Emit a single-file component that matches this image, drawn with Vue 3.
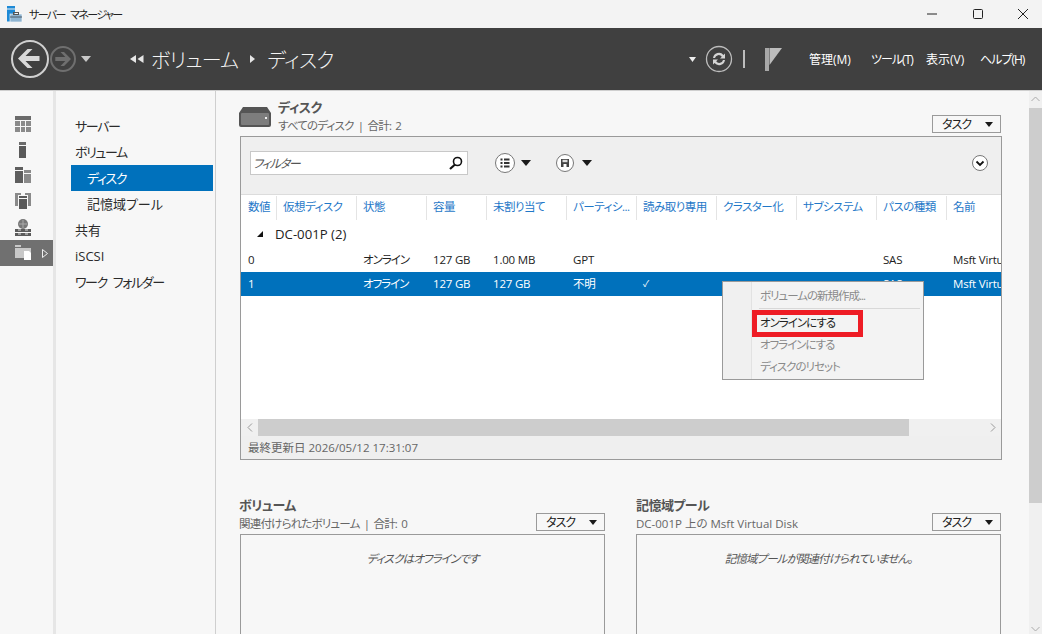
<script setup>
const sideIcons = ['dash', 'server', 'all', 'group', 'iis', 'files']

const serverNav = [
  { label: 'サーバー', tight: true },
  { label: 'ボリューム', tight: true },
  { label: 'ディスク', sub: true, active: true, tight: true },
  { label: '記憶域プール', sub: true },
  { label: '共有' },
  { label: 'iSCSI' },
  { label: 'ワーク フォルダー', tight: true }
]

const columns = ['数値', '仮想ディスク', '状態', '容量', '未割り当て', 'パーティシ...', '読み取り専用', 'クラスター化', 'サブシステム', 'パスの種類', '名前']

const rows = [
  ['0', '', 'オンライン', '127 GB', '1.00 MB', 'GPT', '', '', '', 'SAS', 'Msft Virtual Disk'],
  ['1', '', 'オフライン', '127 GB', '127 GB', '不明', '✓', '', '', 'SAS', 'Msft Virtual Disk']
]

const menuItems = [
  { label: 'ボリュームの新規作成...' },
  { sep: true },
  { label: 'オンラインにする', on: true },
  { label: 'オフラインにする' },
  { label: 'ディスクのリセット' }
]
</script>

<template>
  <div class="window">
    <div class="titlebar">
      <svg class="app-icon" width="16" height="16" viewBox="0 0 16 16">
        <rect x="0" y="0" width="8" height="2.5" fill="#1e8ad6" />
        <rect x="0" y="3.5" width="8" height="12" fill="#1e8ad6" />
        <rect x="3" y="8" width="12" height="8" fill="#8fb4d0" stroke="#fff" stroke-width=".6" />
        <rect x="6.5" y="6.5" width="5" height="2" fill="none" stroke="#555" />
        <rect x="3" y="10.5" width="12" height="1" fill="#4a5a68" />
      </svg>
      <span class="app-title">サーバー マネージャー</span>
      <div class="win-btns">
        <svg width="12" height="12" viewBox="0 0 12 12"><path d="M1 6h10" stroke="#222" stroke-width="1" /></svg>
        <svg width="12" height="12" viewBox="0 0 12 12"><rect x="1.5" y="1.5" width="9" height="9" rx="1" fill="none" stroke="#222" /></svg>
        <svg width="12" height="12" viewBox="0 0 12 12"><path d="M1 1l10 10M11 1L1 11" stroke="#222" /></svg>
      </div>
    </div>

    <div class="header">
      <svg class="nav-arrows" width="84" height="40" viewBox="0 0 84 40">
        <circle cx="20" cy="20" r="18" fill="none" stroke="#d0d0d0" stroke-width="2" />
        <path d="M8 19.500l9.500-9.500h5l-7 7h14v5h-14l7 7h-5z" fill="#d8d8d8" />
        <circle cx="53" cy="20" r="12" fill="none" stroke="#6f6f6f" stroke-width="2" />
        <path d="M61 20l-7-7h-3.500l4.800 5h-10v4h10l-4.800 5h3.500z" fill="#6f6f6f" />
        <path d="M71 17h10l-5 6z" fill="#c8c8c8" />
      </svg>
      <div class="crumbs">
        <svg width="14" height="8" viewBox="0 0 14 8"><path d="M6 0v8L0 4zM7.500 4l6-4v8z" fill="#e6e6e6" /></svg>
        <span class="crumb first">ボリューム</span>
        <svg width="5" height="8" viewBox="0 0 5 8"><path d="M0 0l5 4-5 4z" fill="#e6e6e6" /></svg>
        <span class="crumb">ディスク</span>
      </div>
      <div class="header-right">
        <svg width="7" height="5" viewBox="0 0 7 5"><path d="M0 0h7L3.500 5z" fill="#eee" /></svg>
        <svg class="refresh" width="28" height="28" viewBox="0 0 28 28">
          <circle cx="14" cy="14" r="12.500" fill="none" stroke="#bdbdbd" stroke-width="1.300" />
          <path d="M8 13a6 6 0 0 1 10.500-3l1.500-1.500v5h-5l1.800-1.800A3.800 3.800 0 0 0 10 13z" fill="#d4d4d4" />
          <path d="M20 15a6 6 0 0 1-10.500 3L8 19.500v-5h5l-1.800 1.800A3.800 3.800 0 0 0 18 15z" fill="#d4d4d4" />
        </svg>
        <span class="bar"></span>
        <svg class="flag" width="17" height="23" viewBox="0 0 17 23">
          <rect x="0" y="0" width="4" height="23" fill="#a8a8a8" />
          <path d="M4.500 0H17L4.500 17z" fill="#bdbdbd" />
        </svg>
        <nav class="menu-bar">
          <span class="m-manage">管理(M)</span>
          <span class="m-tools">ツール(T)</span>
          <span class="m-view">表示(V)</span>
          <span class="m-help">ヘルプ(H)</span>
        </nav>
      </div>
    </div>

    <div class="body">
      <aside class="icon-rail">
        <div v-for="ic in sideIcons" :key="ic" class="rail-item" :class="{ on: ic === 'files' }">
          <svg v-if="ic === 'dash'" width="16" height="16" viewBox="0 0 16 16">
            <rect width="16" height="4" fill="#6b6b6b" />
            <path d="M0 5h5v5H0zM6 5h4v5H6zM11 5h5v5h-5zM0 11h5v5H0zM6 11h4v5H6zM11 11h5v5h-5z" fill="#8a8a8a" />
          </svg>
          <svg v-else-if="ic === 'server'" class="ic-server" width="7" height="16" viewBox="0 0 7 16">
            <rect width="7" height="3" fill="#6b6b6b" />
            <rect y="4" width="7" height="12" fill="#5a5a5a" />
          </svg>
          <svg v-else-if="ic === 'all'" width="16" height="16" viewBox="0 0 16 16">
            <path d="M0 0h8v3H0zM0 4h8v12H0z" fill="#5e5e5e" />
            <path d="M9 3h7v3H9zM9 7h7v9H9z" fill="#8a8a8a" />
          </svg>
          <svg v-else-if="ic === 'group'" width="16" height="16" viewBox="0 0 16 16">
            <path d="M0 0h6v2H3v11H0zM10 0h6v13h-3V2h-3z" fill="#8a8a8a" />
            <path d="M4 3h8v2H4zM4 6h8v10H4z" fill="#5a5a5a" />
          </svg>
          <svg v-else-if="ic === 'iis'" width="16" height="17" viewBox="0 0 16 17">
            <circle cx="8" cy="5" r="5" fill="#777" />
            <path d="M8 1v8M4 5h8" stroke="#aaa" />
            <path d="M0 10h16v3H0zM0 14h16v3H0z" fill="#5a5a5a" />
            <path d="M3 11h3M10 11h3M3 15h3M10 15h3" stroke="#ddd" />
          </svg>
          <svg v-else width="16" height="15" viewBox="0 0 16 15">
            <path d="M0 0h6v2H0zM0 3h16v10H0z" fill="#c8c8c8" />
            <path d="M9 6h5l2 2v7H9z" fill="#fff" />
          </svg>
          <svg v-if="ic === 'files'" class="rail-caret" width="6" height="9" viewBox="0 0 6 9"><path d="M.5.500l5 4-5 4z" fill="none" stroke="#eee" /></svg>
        </div>
      </aside>

      <nav class="server-nav">
        <div v-for="n in serverNav" :key="n.label" class="nav-row" :class="{ sub: n.sub, active: n.active, tight: n.tight }">{{ n.label }}</div>
      </nav>

      <main class="content">
        <section class="disk-head">
          <svg class="disk-icon" width="32" height="20" viewBox="0 0 32 20">
            <path d="M4 0h24l4 6v12a2 2 0 0 1-2 2H2a2 2 0 0 1-2-2V6z" fill="#555" />
            <rect x="2" y="6" width="28" height="12" rx="1" fill="#7d7d7d" />
            <rect x="26" y="10" width="2" height="2" fill="#eee" />
          </svg>
          <div class="titles">
            <div class="h-title">ディスク</div>
            <div class="h-sub">すべてのディスク | 合計: 2</div>
          </div>
          <button class="task-btn"><span>タスク</span><i class="tri"></i></button>
        </section>

        <section class="panel">
          <div class="toolbar">
            <div class="filter">
              <span>フィルター</span>
              <svg width="14" height="14" viewBox="0 0 14 14">
                <circle cx="8.500" cy="5.500" r="4" fill="none" stroke="#111" stroke-width="1.600" />
                <path d="M6 8.500L1 13" stroke="#111" stroke-width="2.200" />
              </svg>
            </div>
            <div class="tool tool-list">
              <svg width="20" height="20" viewBox="0 0 20 20">
                <circle cx="10" cy="10" r="9.500" fill="#fff" stroke="#777" />
                <path d="M5.500 6.500h2M5.500 10h2M5.500 13.500h2M9 6.500h5.500M9 10h5.500M9 13.500h5.500" stroke="#333" stroke-width="1.800" />
              </svg>
              <i class="tri"></i>
            </div>
            <div class="tool tool-save">
              <svg width="18" height="18" viewBox="0 0 18 18">
                <circle cx="9" cy="9" r="8.500" fill="#fff" stroke="#777" />
                <path d="M5 5h8v8H5z" fill="#444" />
                <path d="M6.500 5.800h5v2.400h-5z" fill="#ddd" />
                <path d="M7.500 10h3v3h-3z" fill="#fff" />
              </svg>
              <i class="tri"></i>
            </div>
            <svg class="collapse" width="16" height="16" viewBox="0 0 16 16">
              <circle cx="8" cy="8" r="7.500" fill="#fff" stroke="#777" />
              <path d="M4.500 6.500L8 10l3.500-3.500" fill="none" stroke="#111" stroke-width="1.800" />
            </svg>
          </div>

          <div class="table">
            <div class="t-row t-head">
              <div v-for="c in columns" :key="c" class="cell">{{ c }}</div>
            </div>
            <div class="group"><i class="expander"></i>DC-001P (2)</div>
            <div v-for="(r, i) in rows" :key="i" class="t-row t-body" :class="{ selected: i === 1 }">
              <div v-for="(v, j) in r" :key="j" class="cell" :class="{ check: v === '✓', status: j === 2 }">{{ v }}</div>
            </div>
          </div>

          <div class="hscroll">
            <span class="sc-btn">
              <svg width="6" height="9" viewBox="0 0 6 9"><path d="M5 .500L1 4.500l4 4" fill="none" stroke="#999" /></svg>
            </span>
            <div class="hthumb"></div>
            <span class="sc-btn">
              <svg width="6" height="9" viewBox="0 0 6 9"><path d="M1 .500l4 4-4 4" fill="none" stroke="#999" /></svg>
            </span>
          </div>
          <div class="panel-foot">最終更新日 2026/05/12 17:31:07</div>
        </section>

        <div class="lower">
          <section class="sub-panel left">
            <div class="sub-head">
              <div class="titles">
                <div class="h-title">ボリューム</div>
                <div class="h-sub">関連付けられたボリューム | 合計: 0</div>
              </div>
              <button class="task-btn"><span>タスク</span><i class="tri"></i></button>
            </div>
            <div class="sub-box">ディスクはオフラインです</div>
          </section>
          <section class="sub-panel">
            <div class="sub-head">
              <div class="titles">
                <div class="h-title">記憶域プール</div>
                <div class="h-sub latin">DC-001P 上の Msft Virtual Disk</div>
              </div>
              <button class="task-btn"><span>タスク</span><i class="tri"></i></button>
            </div>
            <div class="sub-box">記憶域プールが関連付けられていません。</div>
          </section>
        </div>
      </main>

      <div class="vscroll">
        <svg width="9" height="6" viewBox="0 0 9 6"><path d="M.500 5l4-4 4 4" fill="none" stroke="#aaa" /></svg>
        <div class="vthumb"></div>
        <svg class="v-down" width="9" height="6" viewBox="0 0 9 6"><path d="M.500 1l4 4 4-4" fill="none" stroke="#aaa" /></svg>
      </div>
    </div>

    <!-- context menu floats over the table -->
    <div class="ctx">
      <template v-for="(m, i) in menuItems" :key="i">
        <div v-if="m.sep" class="ctx-sep"></div>
        <div v-else class="ctx-item" :class="{ on: m.on }">{{ m.label }}</div>
      </template>
    </div>
    <div class="highlight"></div>
  </div>
</template>

<style scoped>
.window {
  position: relative;
  width: 1042px;
  height: 634px;
  overflow: hidden;
  display: flex;
  flex-direction: column;
  background: #f7f7f7;
  font-family: "Open Sans", "Noto Sans CJK JP", sans-serif;
  font-size: 12px;
  font-feature-settings: "palt";
  color: #222;
}

.titlebar {
  height: 28px;
  flex: none;
  display: flex;
  align-items: center;
  padding-left: 7px;
  background: #f3f3f3;
}
.app-title {
  margin-left: 6px;
  font-size: 11px;
  letter-spacing: -1.600px;
  word-spacing: 4px;
}
.win-btns {
  margin-left: auto;
  display: flex;
  gap: 33.500px;
  padding-right: 13px;
}

.header {
  height: 62px;
  flex: none;
  display: flex;
  align-items: center;
  padding-left: 10px;
  background: #404040;
  color: #fff;
}
.crumbs {
  display: flex;
  align-items: center;
  margin-left: 36px;
}
.crumb {
  font-size: 20px;
  font-weight: 300;
  letter-spacing: -0.600px;
  color: #f4f4f4;
  margin-left: 12px;
}
.crumb.first {
  margin-left: 7px;
  margin-right: 12px;
}
.header-right {
  margin-left: auto;
  display: flex;
  align-items: center;
}
.refresh { margin-left: 9px; }
.bar {
  width: 2px;
  height: 18px;
  margin: 0 20px 0 10px;
  background: #bdbdbd;
}
.flag { margin-right: 27px; }
.menu-bar {
  display: flex;
  font-size: 12px;
}
.m-manage { width: 62px; }
.m-tools { width: 55px; letter-spacing: -1px; }
.m-view { width: 54px; }
.m-help { width: 62px; letter-spacing: -1px; }

.body {
  flex: 1;
  min-height: 0;
  display: flex;
  border-top: 1px solid #cfcfcf;
}

.icon-rail {
  width: 53px;
  flex: none;
  padding-top: 20px;
  box-sizing: border-box;
  background: #f7f7f7;
}
.rail-item {
  height: 25.800px;
  padding-left: 15px;
  display: flex;
  align-items: center;
  position: relative;
}
.rail-item.on { background: #707070; }
.rail-caret { position: absolute; left: 42px; top: 9px; }
.ic-server { margin-left: 4px; }

.server-nav {
  width: 163px;
  flex: none;
  padding: 22px 2px 0 15px;
  box-sizing: border-box;
  border-left: 3px solid #e6e6e6;
  border-right: 1px solid #cfcfcf;
}
.nav-row {
  height: 26px;
  line-height: 26px;
  padding-left: 4px;
  font-size: 13px;
  color: #2b2b2b;
}
.nav-row.tight {
  letter-spacing: -1.400px;
  word-spacing: 4px;
}
.nav-row.sub { padding-left: 16px; }
.nav-row.active {
  background: #0071bc;
  color: #fff;
}

.content {
  flex: 1;
  min-width: 0;
  padding: 8px 0 0 23px;
  box-sizing: border-box;
  overflow: hidden;
}
.disk-head {
  width: 763px;
  height: 37px;
  display: flex;
  align-items: flex-start;
}
.disk-icon { margin-top: 8px; flex: none; }
.titles { margin-left: 7px; }
.h-title {
  font-size: 13px;
  line-height: 18px;
  font-weight: 700;
  letter-spacing: -0.500px;
  color: #555;
}
.h-sub {
  font-size: 11.500px;
  line-height: 18px;
  letter-spacing: -0.800px;
  word-spacing: 2px;
  color: #666;
}
.h-sub.latin { letter-spacing: 0; word-spacing: 0; }
.disk-head .h-title { margin: -1px 0 1px; }
.disk-head .task-btn { margin: 16px 1px 0 auto; }

.task-btn {
  width: 69px;
  height: 18px;
  padding: 0 0 0 9px;
  display: flex;
  align-items: center;
  justify-content: space-between;
  box-sizing: border-box;
  border: 1px solid #9a9a9a;
  background: #f7f7f7;
  font: inherit;
  font-size: 12px;
  letter-spacing: -1px;
  color: #222;
}
.task-btn .tri {
  margin-right: 7px;
  border-left-width: 4.500px;
  border-right-width: 4.500px;
  border-top-width: 5px;
}
.tri {
  display: block;
  width: 0;
  height: 0;
  border-left: 5.500px solid transparent;
  border-right: 5.500px solid transparent;
  border-top: 6px solid #1a1a1a;
}

.panel {
  width: 762px;
  height: 324px;
  margin-left: 1px;
  display: flex;
  flex-direction: column;
  box-sizing: border-box;
  border: 1px solid #9a9a9a;
  background: #fff;
}
.toolbar {
  height: 57px;
  flex: none;
  display: flex;
  align-items: center;
  padding: 0 13px 6px 9px;
  box-sizing: border-box;
  background: #efefef;
}
.filter {
  width: 218px;
  height: 24px;
  display: flex;
  align-items: center;
  justify-content: space-between;
  padding: 0 4px 0 2px;
  box-sizing: border-box;
  border: 1px solid #c8c8c8;
  background: #fff;
  font-style: italic;
  letter-spacing: -1.200px;
  color: #555;
}
.tool {
  display: flex;
  align-items: center;
}
.tool-list { gap: 6px; margin-left: 27px; }
.tool-save { gap: 8px; margin-left: 25px; }
.collapse { margin-left: auto; }

.table {
  flex: 1;
  min-height: 0;
  overflow: hidden;
  background: #fff;
}
.t-row {
  display: grid;
  grid-template-columns: 36px 80px 70px 60px 80px 70px 80px 80px 80px 70px 54px;
}
.t-head {
  height: 25px;
  align-items: center;
  border-top: 1px solid #dcdcdc;
  color: #1f78c8;
  font-size: 11.500px;
  letter-spacing: -0.500px;
}
.t-head .cell {
  height: 24px;
  line-height: 22px;
  border-right: 1px solid #e4e4e4;
}
.t-head .cell:last-child { border-right: none; }
.cell {
  padding-left: 6px;
  white-space: nowrap;
  overflow: hidden;
  box-sizing: border-box;
}
.cell:first-child { padding-left: 7px; }
.group {
  height: 28px;
  display: flex;
  align-items: center;
  padding-left: 16px;
  font-size: 13.200px;
}
.expander {
  width: 0;
  height: 0;
  margin-right: 12px;
  border-left: 6px solid transparent;
  border-bottom: 6px solid #111;
}
.t-body {
  height: 24px;
  line-height: 24px;
  font-size: 11.500px;
  letter-spacing: -0.200px;
}
.t-body .status { letter-spacing: -1px; }
.t-body .check { font-size: 9px; }
.t-body.selected {
  background: #0071bc;
  color: #fff;
}

.hscroll {
  height: 17px;
  flex: none;
  display: flex;
  background: #f0f0f0;
}
.sc-btn {
  width: 17px;
  flex: none;
  display: flex;
  align-items: center;
  justify-content: center;
}
.hthumb {
  width: 651px;
  background: #cdcdcd;
}
.hthumb + .sc-btn { margin-left: auto; }
.panel-foot {
  height: 23px;
  flex: none;
  padding-left: 7px;
  line-height: 24px;
  background: #efefef;
  color: #666;
  font-size: 11.500px;
}

.lower {
  width: 763px;
  margin-top: 37px;
  display: flex;
  gap: 31px;
}
.sub-panel {
  width: 365px;
  flex: none;
}
.sub-panel.left { width: 366px; }
.sub-panel.left .sub-box { margin-left: 1px; }
.sub-head {
  height: 37px;
  display: flex;
  align-items: flex-end;
  justify-content: space-between;
  padding-bottom: 3px;
  box-sizing: border-box;
}
.sub-head .titles { margin: 0 0 -2px; }
.sub-head .h-title { margin-bottom: 1px; }
.sub-box {
  height: 120px;
  padding-top: 15px;
  box-sizing: border-box;
  border: 1px solid #9a9a9a;
  text-align: center;
  font-style: italic;
  font-size: 11.500px;
  letter-spacing: -0.900px;
  color: #555;
}

.vscroll {
  width: 13px;
  flex: none;
  display: flex;
  flex-direction: column;
  align-items: center;
  background: #f0f0f0;
  padding-top: 5px;
  box-sizing: border-box;
}
.vthumb {
  width: 100%;
  height: 395px;
  margin-top: 6px;
  background: #cdcdcd;
}
.v-down { margin-top: auto; margin-bottom: 2px; }

.ctx {
  position: absolute;
  left: 722px;
  top: 281px;
  width: 202px;
  height: 99px;
  padding: 3px 3px 0 37px;
  box-sizing: border-box;
  border: 1px solid #9a9a9a;
  background: linear-gradient(to right, #f0f0f0 28px, #e2e2e2 28px, #e2e2e2 29px, #f3f3f3 29px);
  font-size: 11.500px;
  letter-spacing: -1px;
  color: #8a8a8a;
}
.ctx-item {
  height: 22px;
  line-height: 22px;
}
.ctx-item.on { color: #222; }
.ctx-sep {
  height: 1px;
  margin: 1px 0 3px -1px;
  background: #d8d8d8;
}
.highlight {
  position: absolute;
  left: 752px;
  top: 310px;
  width: 111px;
  height: 27px;
  box-sizing: border-box;
  border: 5px solid #ee1c25;
}
</style>
